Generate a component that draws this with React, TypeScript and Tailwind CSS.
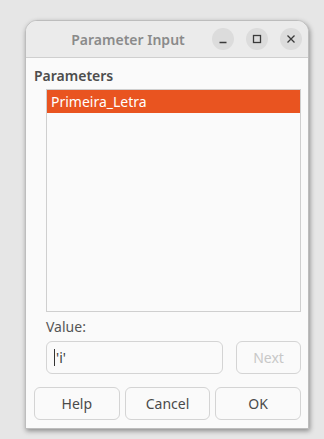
import React from 'react';

const font = { fontFamily: '"Noto Sans", "Open Sans", sans-serif' };

function TitleButton({ children }: { children: React.ReactNode }) {
  return (
    <div className="flex h-[22px] w-[22px] items-center justify-center rounded-full bg-[#dcdcdc]">
      {children}
    </div>
  );
}

function DialogButton({ label, disabled }: { label: string; disabled?: boolean }) {
  return (
    <div
      className={
        'flex items-center justify-center rounded-[6px] border border-[#d4d4d4] bg-[#fafafa] text-[14px] ' +
        (disabled ? 'text-[#c8c8c8]' : 'text-[#4a4a4a]')
      }
    >
      {label}
    </div>
  );
}

export default function App() {
  return (
    <div className="h-[439px] w-[324px] overflow-hidden bg-[#e6e6e6] pl-[25px] pt-[20px]" style={font}>
      <div className="flex h-[409px] w-[284px] flex-col overflow-hidden rounded-t-[12px] border border-[#bdbdbd] bg-[#fafafa] shadow-[1px_2px_5px_rgba(0,0,0,0.4)]">
        {/* title bar */}
        <div className="flex h-[37px] shrink-0 items-center border-b border-[#cfcfcf] bg-[#ebebeb] pr-[6px]">
          <div className="flex-1 pl-[18px] text-center text-[14px] font-semibold text-[#8a8a8a]">Parameter Input</div>
          <div className="flex gap-[12px]">
            <TitleButton>
              <svg width="10" height="10" viewBox="0 0 10 10">
                <path d="M1.5 8.5h7" stroke="#3a3a3a" strokeWidth="1.3" />
              </svg>
            </TitleButton>
            <TitleButton>
              <svg width="10" height="10" viewBox="0 0 10 10">
                <rect x="1.5" y="1.5" width="7" height="7" fill="none" stroke="#3a3a3a" strokeWidth="1.3" />
              </svg>
            </TitleButton>
            <TitleButton>
              <svg width="10" height="10" viewBox="0 0 10 10">
                <path d="M1.5 1.5l7 7M8.5 1.5l-7 7" stroke="#3a3a3a" strokeWidth="1.3" />
              </svg>
            </TitleButton>
          </div>
        </div>

        {/* content */}
        <div className="flex flex-1 flex-col pl-[8px] pr-[7px]">
          <div className="mt-[8px] h-[20px] text-[14px] font-semibold leading-[20px] text-[#4d4d4d]">Parameters</div>
          <div className="ml-[12px] mt-[3px] h-[223px] border border-[#cfcfcf] bg-[#fafafa]">
            <div className="flex h-[23px] items-center bg-[#e95420] pl-[4px] text-[14px] text-white">Primeira_Letra</div>
          </div>
          <div className="ml-[12px] mt-[5px] h-[20px] text-[14px] leading-[20px] text-[#555555]">Value:</div>
          <div className="ml-[12px] mt-[4px] flex h-[33px] gap-[13px]">
            <div className="flex w-[177px] items-center rounded-[6px] border border-[#d4d4d4] bg-[#fafafa] pl-[7px] text-[14px] text-[#3d3d3d]">
              <span className="mr-[1px] inline-block h-[17px] w-[1px] bg-[#333333]" />
              <span>'i'</span>
            </div>
            <div className="grid flex-1">
              <DialogButton label="Next" disabled />
            </div>
          </div>
          <div className="mt-[13px] grid h-[33px] grid-cols-3 gap-[5px]">
            <DialogButton label="Help" />
            <DialogButton label="Cancel" />
            <DialogButton label="OK" />
          </div>
        </div>
      </div>
    </div>
  );
}
